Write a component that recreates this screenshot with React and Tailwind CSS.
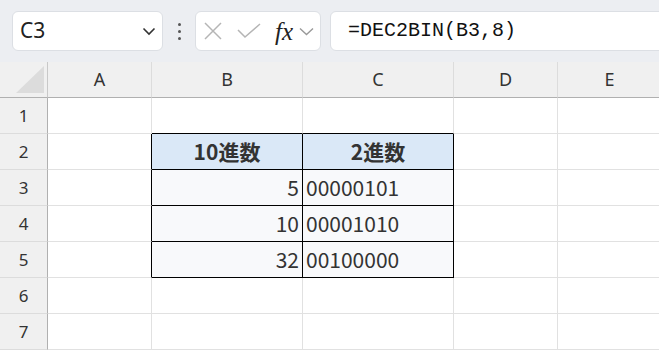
import React from 'react';

const cols = ['A', 'B', 'C', 'D', 'E'];
const rows = [1, 2, 3, 4, 5, 6, 7];

const data = {
  2: { B: { v: '10進数', head: true }, C: { v: '2進数', head: true } },
  3: { B: { v: '5', right: true }, C: { v: '00000101' } },
  4: { B: { v: '10', right: true }, C: { v: '00001010' } },
  5: { B: { v: '32', right: true }, C: { v: '00100000' } },
};

const inTable = (r, c) => r >= 2 && r <= 5 && (c === 'B' || c === 'C');

const cellClass = (r, c) => {
  const right = inTable(r, c) || (c === 'A' && r >= 2 && r <= 5) ? 'border-r-black' : 'border-r-[#e1e1e1]';
  const bottom = inTable(r, c) || ((c === 'B' || c === 'C') && r === 1) ? 'border-b-black' : 'border-b-[#e1e1e1]';
  let bg = 'bg-white';
  if (inTable(r, c)) bg = r === 2 ? 'bg-[#dae8f7]' : 'bg-[#f8f9fb]';
  return `h-[36px] border-r border-b ${right} ${bottom} ${bg}`;
};

const App = () => {
  return (
    <div className="w-[659px] h-[352px] overflow-hidden bg-white" style={{ fontFamily: '"Noto Sans", "Noto Sans CJK JP", sans-serif' }}>
      {/* toolbar */}
      <div className="h-[62px] bg-[#eceef2] flex items-center pl-[12px]">
        <div className="w-[151px] shrink-0 h-[40px] bg-white rounded-[6px] border border-[#dcdfe4] flex items-center justify-between pl-[7px] pr-[5px]">
          <span className="text-[21px] text-[#222]">C3</span>
          <svg width="16" height="16" viewBox="0 0 16 16" fill="none" stroke="#333" strokeWidth="1.6">
            <path d="M2.5 5.5 L8 11 L13.5 5.5" />
          </svg>
        </div>
        <div className="w-[32px] shrink-0 flex flex-col items-center gap-[4px]">
          <span className="w-[3px] h-[3px] rounded-full bg-[#555]" />
          <span className="w-[3px] h-[3px] rounded-full bg-[#555]" />
          <span className="w-[3px] h-[3px] rounded-full bg-[#555]" />
        </div>
        <div className="w-[126px] shrink-0 h-[40px] bg-white rounded-[6px] border border-[#dcdfe4] flex items-center pl-[7px]">
          <svg width="20" height="20" viewBox="0 0 20 20" stroke="#b5b5b5" strokeWidth="1.5" fill="none">
            <path d="M2 2 L18 18 M18 2 L2 18" />
          </svg>
          <svg className="ml-[14px]" width="24" height="16" viewBox="0 0 24 16" stroke="#b5b5b5" strokeWidth="1.5" fill="none">
            <path d="M1 7 L8 14 L23 1" />
          </svg>
          <span className="ml-[14px] text-[25px] italic text-[#222] leading-none" style={{ fontFamily: '"Liberation Serif", serif' }}>fx</span>
          <svg className="ml-[6px]" width="15" height="9" viewBox="0 0 15 9" stroke="#999" strokeWidth="1.4" fill="none">
            <path d="M1 1.5 L7.5 7.5 L14 1.5" />
          </svg>
        </div>
        <div className="ml-[9px] w-[345px] shrink-0 h-[40px] bg-white rounded-[6px] border border-[#dcdfe4] flex items-center pl-[17px]">
          <span className="text-[20px] text-[#111]" style={{ fontFamily: '"Liberation Mono", monospace' }}>=DEC2BIN(B3,8)</span>
        </div>
      </div>

      {/* sheet */}
      <div className="grid grid-cols-[48px_104px_151px_151px_104px_104px] w-[662px]">
        <div className="h-[36px] bg-[#f0f0f0] border-r border-b border-r-[#c8c8c8] border-b-[#b0b0b0] relative">
          <svg className="absolute left-[16px] top-[4px]" width="28" height="28" viewBox="0 0 28 28">
            <polygon points="0,27 28,27 28,0" fill="#dcdcdc" />
          </svg>
        </div>
        {cols.map((c) => (
          <div key={c} className="h-[36px] bg-[#f0f0f0] border-r border-b border-r-[#dcdcdc] border-b-[#b0b0b0] flex items-center justify-center text-[18px] text-[#333]">
            {c}
          </div>
        ))}
        {rows.map((r) => (
          <React.Fragment key={r}>
            <div className="h-[36px] bg-[#f0f0f0] border-r border-b border-r-[#b0b0b0] border-b-[#dcdcdc] flex items-center justify-center text-[17px] text-[#333]">
              {r}
            </div>
            {cols.map((c) => {
              const d = data[r] && data[r][c];
              return (
                <div key={c} className={cellClass(r, c)}>
                  {d && (
                    <div
                      className={`h-full flex items-center text-[21px] text-[#333] ${d.head ? 'justify-center font-bold' : d.right ? 'justify-end pr-[3px]' : 'justify-start pl-[3px]'}`}
                      style={{ fontFamily: '"Noto Sans CJK JP", sans-serif' }}
                    >
                      {d.v}
                    </div>
                  )}
                </div>
              );
            })}
          </React.Fragment>
        ))}
      </div>
    </div>
  );
};

export default App;
